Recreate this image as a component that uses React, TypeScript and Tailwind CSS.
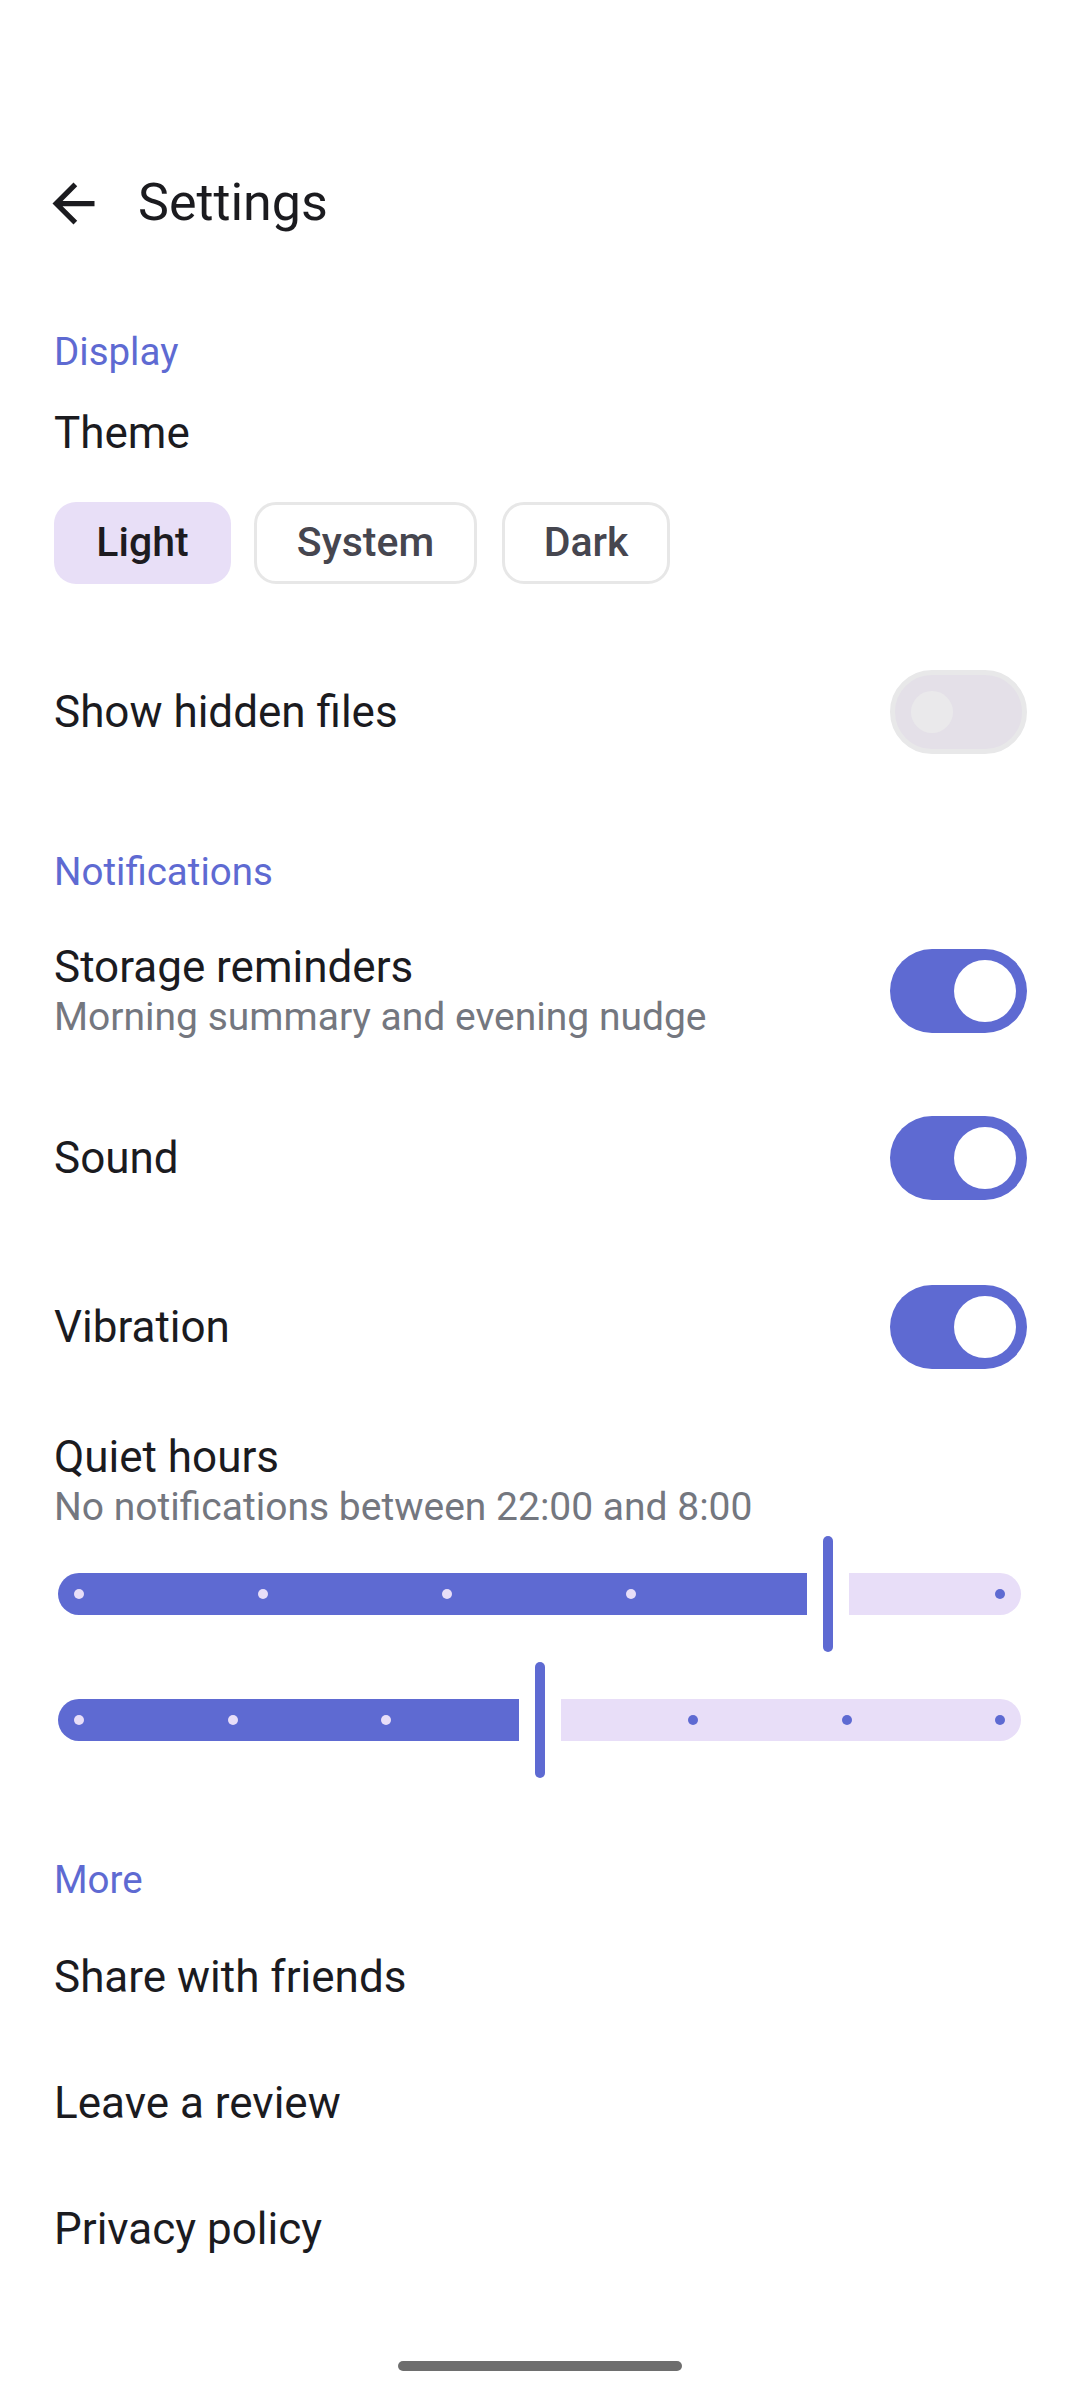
import React from "react";

const INDIGO = "bg-[#5e6ad2]";

function Toggle({ on }: { on: boolean }) {
  if (on) {
    return (
      <div className="w-[137px] h-[84px] shrink-0 rounded-full bg-[#5e6ad2] flex items-center justify-end pr-[11px]">
        <div className="w-[62px] h-[62px] rounded-full bg-white" />
      </div>
    );
  }
  return (
    <div className="w-[137px] h-[84px] shrink-0 rounded-full border-[5px] border-[#e8e8e9] bg-[#e4e0e8] flex items-center pl-[16px]">
      <div className="w-[42px] h-[42px] rounded-full bg-[#eae9eb]" />
    </div>
  );
}

function Dot({ light }: { light: boolean }) {
  return (
    <div
      className={
        light
          ? "w-[10px] h-[10px] rounded-full bg-[#e8def8] shrink-0"
          : "w-[10px] h-[10px] rounded-full bg-[#5e6ad2] shrink-0"
      }
    />
  );
}

export default function App() {
  return (
    <div className="w-[1080px] h-[2400px] bg-white font-['Roboto',sans-serif] text-[#1b1b1f] flex flex-col">
      {/* Top app bar */}
      <div className="mt-[140px] h-[126px] flex items-center pl-[42px]">
        <svg width="63" height="63" viewBox="0 0 24 24">
          <path
            d="M20 11H7.83l5.59-5.59L12 4l-8 8 8 8 1.41-1.41L7.83 13H20v-2z"
            fill="#1b1b1f"
          />
        </svg>
        <span className="ml-[33px] text-[52px] leading-[60px]">Settings</span>
      </div>

      <div className="flex flex-col pl-[54px] pr-[53px]">
        {/* Display */}
        <div className="mt-[55.5px] h-[60px] flex items-center text-[38.5px] text-[#5e6ad2]">
          Display
        </div>
        <div className="mt-[21px] h-[60px] flex items-center text-[44px]">Theme</div>
        <div className="mt-[39.5px] flex">
          <div className="w-[177px] h-[82px] rounded-[22px] bg-[#e8dff7] flex items-center justify-center text-[41px] font-medium text-[#1d1b20]">
            Light
          </div>
          <div className="ml-[23px] w-[223px] h-[82px] rounded-[22px] border-[3px] border-[#e7e7e7] flex items-center justify-center text-[41px] font-medium text-[#46464f]">
            System
          </div>
          <div className="ml-[25px] w-[168px] h-[82px] rounded-[22px] border-[3px] border-[#e7e7e7] flex items-center justify-center text-[41px] font-medium text-[#46464f]">
            Dark
          </div>
        </div>

        <div className="mt-[86px] h-[84px] flex items-center justify-between">
          <span className="text-[44px]">Show hidden files</span>
          <Toggle on={false} />
        </div>

        {/* Notifications */}
        <div className="mt-[87.5px] h-[60px] flex items-center text-[38.5px] text-[#5e6ad2]">
          Notifications
        </div>

        <div className="mt-[39px] h-[100px] flex items-center justify-between">
          <div className="flex flex-col">
            <span className="h-[52px] leading-[52px] text-[44px]">Storage reminders</span>
            <span className="h-[48px] leading-[48px] text-[39px] text-[#74777f]">
              Morning summary and evening nudge
            </span>
          </div>
          <Toggle on={true} />
        </div>

        <div className="mt-[75.5px] h-[84px] flex items-center justify-between">
          <span className="text-[44px]">Sound</span>
          <Toggle on={true} />
        </div>

        <div className="mt-[84.5px] h-[84px] flex items-center justify-between">
          <span className="text-[44px]">Vibration</span>
          <Toggle on={true} />
        </div>

        <div className="mt-[62.5px] flex flex-col">
          <span className="h-[52px] leading-[52px] text-[44px]">Quiet hours</span>
          <span className="h-[48px] leading-[48px] text-[39px] text-[#74777f]">
            No notifications between 22:00 and 8:00
          </span>
        </div>

        {/* Slider 1 */}
        <div className="mt-[5px] ml-[4px] w-[963px] h-[116px] flex items-center">
          <div className={`w-[749px] h-[42px] rounded-l-full rounded-r-[4px] ${INDIGO} flex items-center pl-[16px] gap-[174px]`}>
            <Dot light />
            <Dot light />
            <Dot light />
            <Dot light />
          </div>
          <div className="ml-[16px] w-[10px] h-[116px] rounded-full bg-[#5e6ad2]" />
          <div className="ml-[16px] flex-1 h-[42px] rounded-r-full rounded-l-[4px] bg-[#e8def8] flex items-center justify-end pr-[16px]">
            <Dot light={false} />
          </div>
        </div>

        {/* Slider 2 */}
        <div className="mt-[10px] ml-[4px] w-[963px] h-[116px] flex items-center">
          <div className={`w-[461px] h-[42px] rounded-l-full rounded-r-[4px] ${INDIGO} flex items-center pl-[16px] gap-[143.5px]`}>
            <Dot light />
            <Dot light />
            <Dot light />
          </div>
          <div className="ml-[16px] w-[10px] h-[116px] rounded-full bg-[#5e6ad2]" />
          <div className="ml-[16px] flex-1 h-[42px] rounded-r-full rounded-l-[4px] bg-[#e8def8] flex items-center justify-end pr-[16px] gap-[143.5px]">
            <Dot light={false} />
            <Dot light={false} />
            <Dot light={false} />
          </div>
        </div>

        {/* More */}
        <div className="mt-[72px] h-[60px] flex items-center text-[38.5px] text-[#5e6ad2]">
          More
        </div>
        <div className="mt-[4px] h-[126px] flex items-center text-[44px]">Share with friends</div>
        <div className="h-[126px] flex items-center text-[44px]">Leave a review</div>
        <div className="h-[126px] flex items-center text-[44px]">Privacy policy</div>
      </div>

      <div className="mt-[69px] mx-auto w-[284px] h-[10px] rounded-full bg-[#6e6e6e]" />
    </div>
  );
}
